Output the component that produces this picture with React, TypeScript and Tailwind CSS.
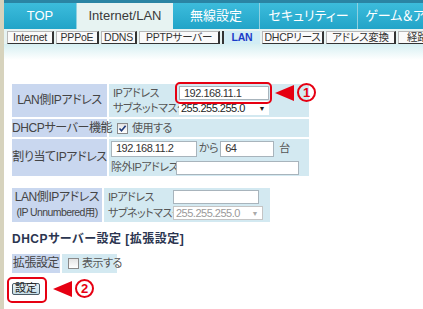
const FONT = "font-['Liberation_Sans','Noto_Sans_CJK_JP',sans-serif] [font-feature-settings:'palt']";

const TABS = [
  { label: "TOP", w: "w-[73px]", active: false },
  { label: "Internet/LAN", w: "w-[96px]", active: true },
  { label: "無線設定", w: "w-[87px]", active: false },
  { label: "セキュリティー", w: "w-[98px]", active: false },
  { label: "ゲーム＆アプリ", w: "w-[98px]", active: false },
];

const SUBTABS = [
  { label: "Internet", w: "w-[47px]" },
  { label: "PPPoE", w: "w-[43px]" },
  { label: "DDNS", w: "w-[36px]" },
  { label: "PPTPサーバー", w: "w-[81px]" },
  { label: "LAN", w: "w-[38px]", active: true },
  { label: "DHCPリース", w: "w-[62px]" },
  { label: "アドレス変換", w: "w-[70px]" },
  { label: "経路情報", w: "w-[60px]" },
];

function Check({ checked }: { checked?: boolean }) {
  return (
    <span className="inline-flex h-[11px] w-[11px] shrink-0 items-center justify-center border border-[#8a8a8a] bg-[linear-gradient(#e4e4e4,#ffffff)]">
      {checked && (
        <svg width="9" height="9" viewBox="0 0 9 9">
          <path d="M1.5 4.5 L3.5 6.8 L7.6 1.8" stroke="#1f3a7a" strokeWidth="1.6" fill="none" />
        </svg>
      )}
    </span>
  );
}

function Input({ value, w, h = "h-[14px]" }: { value?: string; w: string; h?: string }) {
  return (
    <span className={`inline-flex shrink-0 items-center ${w} ${h} border border-[#a8b4bc] bg-white pl-[4px] text-[11px] text-[#333] leading-none`}>
      {value}
    </span>
  );
}

function Select({ value, disabled }: { value: string; disabled?: boolean }) {
  return (
    <span
      className={`inline-flex h-[14px] w-[90px] shrink-0 items-center justify-between bg-white pl-[2px] pr-[4px] text-[11px] leading-none ${
        disabled ? "border border-[#c4c4c4] text-[#9a9a9a]" : "text-[#222]"
      }`}
    >
      {value}
      <span className={`text-[7px] ${disabled ? "text-[#aaa]" : "text-[#222]"}`}>▼</span>
    </span>
  );
}

function Arrow({ n }: { n: string }) {
  return (
    <span className="flex items-center gap-[3px]">
      <svg width="19" height="16" viewBox="0 0 19 16">
        <polygon points="0,8 19,0 19,16" fill="#e60012" />
      </svg>
      <span className="flex h-[19px] w-[19px] items-center justify-center rounded-full border-[2px] border-[#e60012] text-[13px] font-bold leading-none text-[#e60012]">
        {n}
      </span>
    </span>
  );
}

export default function App() {
  const label = "whitespace-nowrap bg-[#c9d7ef] text-center text-[12px] tracking-[-0.4px] text-[#444] leading-[15px] p-0";
  const value = "whitespace-nowrap bg-[#d3e9f1] text-[11px] tracking-[-0.5px] text-[#555] leading-[13px]";

  return (
    <div className={`flex h-[309px] w-[423px] overflow-hidden bg-white ${FONT}`}>
      <div className="w-[4px] shrink-0 bg-[#d7d3bd]" />
      <div className="flex min-w-0 flex-1 flex-col">
        <div className="h-[3px] shrink-0 bg-[#2a84a4]" />
        <div className="flex h-[26px] shrink-0">
          {TABS.map((t) => (
            <div
              key={t.label}
              className={`flex ${t.w} shrink-0 items-center justify-center whitespace-nowrap text-[13px] ${
                t.active
                  ? "bg-[#e7f3f2] text-[#3a3a3a]"
                  : "border-r border-[#8fd0e0] bg-[linear-gradient(#3cbcdc,#22a4c8)] text-white"
              }`}
            >
              {t.label}
            </div>
          ))}
        </div>
        <div className="flex h-[15px] shrink-0 items-center gap-[2px] bg-[#e7f3f2] pl-[3px] pt-[1px]">
          {SUBTABS.map((s) => (
            <div
              key={s.label}
              className={`flex ${s.w} h-[13px] shrink-0 items-center justify-center whitespace-nowrap text-[10.5px] tracking-[-0.2px] leading-none ${
                s.active
                  ? "border-l-2 border-[#333] bg-[#d2edf5] font-bold text-[#1c3cc8]"
                  : "border border-[#b8b8b8] border-b-[#333] border-r-2 border-r-[#333] bg-[#fafafa] text-[#333]"
              }`}
            >
              {s.label}
            </div>
          ))}
        </div>
        <div className="h-[16px] shrink-0 bg-[linear-gradient(#d6eff2,#ffffff)]" />

        <div className="relative flex flex-col pl-[6px] pt-[22px]">
          <table className="w-[301px] table-fixed border-separate border-spacing-[2px]">
            <colgroup>
              <col className="w-[95px]" />
              <col />
            </colgroup>
            <tbody>
              <tr className="h-[33px]">
                <td className={label}>LAN側IPアドレス</td>
                <td className={`${value} pl-[4px]`}>
                  <div className="flex items-center">
                    <span className="w-[66px]">IPアドレス</span>
                    <span className="relative inline-flex">
                      <Input value="192.168.11.1" w="w-[90px]" />
                      <span className="absolute -left-[4px] -right-[3px] -top-[4px] -bottom-[4px] rounded-[5px] border-2 border-[#e60012]" />
                    </span>
                  </div>
                  <div className="mt-[1px] flex items-center">
                    <span className="w-[66px]">サブネットマスク</span>
                    <Select value="255.255.255.0" />
                  </div>
                </td>
              </tr>
              <tr className="h-[18px]">
                <td className={`${label} text-[11.5px]`}>DHCPサーバー機能</td>
                <td className={`${value} pl-[8px]`}>
                  <span className="flex items-center gap-[4px]">
                    <Check checked />
                    使用する
                  </span>
                </td>
              </tr>
              <tr className="h-[37px]">
                <td className={label}>割り当てIPアドレス</td>
                <td className={`${value} pl-[2px]`}>
                  <div className="flex items-center">
                    <Input value="192.168.11.2" w="w-[86px]" h="h-[16px]" />
                    <span className="ml-[2px] mr-[2px]">から</span>
                    <Input value="64" w="w-[54px]" h="h-[16px]" />
                    <span className="ml-[5px]">台</span>
                  </div>
                  <div className="mt-[4px] flex items-center">
                    <span className="w-[65px]">除外IPアドレス:</span>
                    <Input w="w-[123px]" />
                  </div>
                </td>
              </tr>
            </tbody>
          </table>

          <span className="absolute left-[271px] top-[23px]">
            <Arrow n="1" />
          </span>

          <table className="mt-[8px] w-[262px] table-fixed border-separate border-spacing-[2px]">
            <colgroup>
              <col className="w-[90px]" />
              <col />
            </colgroup>
            <tbody>
              <tr className="h-[34px]">
                <td className={`${label} text-[11px] leading-[14px]`}>
                  LAN側IPアドレス
                  <br />
                  <span className="text-[10.5px] tracking-[-0.6px]">(IP Unnumbered用)</span>
                </td>
                <td className={`${value} pl-[4px]`}>
                  <div className="flex items-center">
                    <span className="w-[65px]">IPアドレス</span>
                    <Input w="w-[86px]" />
                  </div>
                  <div className="mt-[2px] flex items-center">
                    <span className="w-[65px]">サブネットマスク</span>
                    <Select value="255.255.255.0" disabled />
                  </div>
                </td>
              </tr>
            </tbody>
          </table>

          <div className="ml-[2px] mt-[8px] whitespace-nowrap text-[12px] font-semibold tracking-[0.5px] text-[#2b3550] leading-[14px]">
            DHCPサーバー設定 [拡張設定]
          </div>

          <table className="mt-[6px] w-[109px] table-fixed border-separate border-spacing-[2px]">
            <colgroup>
              <col className="w-[48px]" />
              <col />
            </colgroup>
            <tbody>
              <tr className="h-[19px]">
                <td className={label}>拡張設定</td>
                <td className={`${value} pl-[6px]`}>
                  <span className="flex items-center gap-[3px] text-[11px]">
                    <Check />
                    表示する
                  </span>
                </td>
              </tr>
            </tbody>
          </table>

          <div className="ml-[2px] mt-[4px] flex items-center gap-[5px]">
            <span className="relative inline-flex">
              <span className="flex h-[12px] w-[28px] items-center justify-center rounded-[2px] border border-[#4a5a66] bg-[linear-gradient(#e8f2f6,#c4dce6)] text-[11px] leading-none text-[#222]">
                設定
              </span>
              <span className="absolute -left-[5px] -right-[7px] -top-[6px] -bottom-[8px] rounded-[5px] border-2 border-[#e60012]" />
            </span>
            <span className="ml-[8px]">
              <Arrow n="2" />
            </span>
          </div>
        </div>
      </div>
    </div>
  );
}
